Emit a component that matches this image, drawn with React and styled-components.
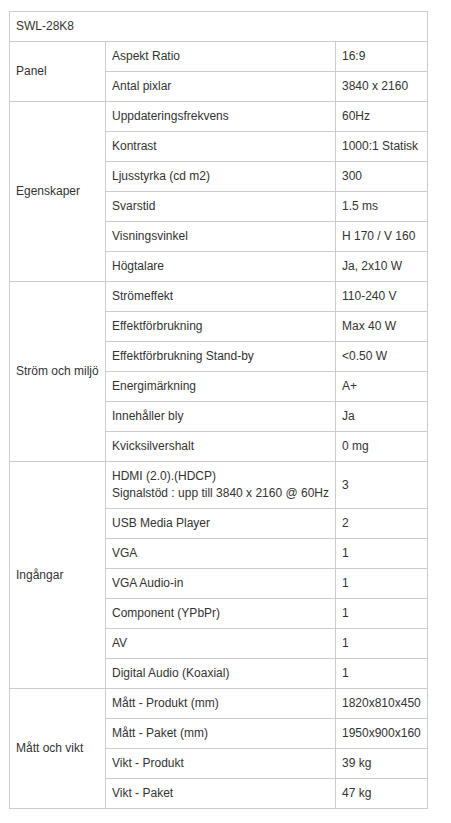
import React from "react";
import styled, { createGlobalStyle } from "styled-components";

const Global = createGlobalStyle`
  html, body { margin: 0; padding: 0; background: #fff; }
  body { font-family: "Liberation Sans", Arial, sans-serif; font-size: 12px; color: #333; }
`;

const Page = styled.div`
  padding: 11px 0 0 9px;
`;

const Table = styled.table`
  border-collapse: collapse;
  table-layout: fixed;
  width: 418px;
  font-size: 12px;
  line-height: 17px;
  color: #333;
`;

const Cell = styled.td`
  border: 1px solid #ccc;
  padding: 6px;
  vertical-align: middle;
  text-align: left;
  white-space: nowrap;
`;

const groups = [
  {
    name: "Panel",
    rows: [
      ["Aspekt Ratio", "16:9"],
      ["Antal pixlar", "3840 x 2160"],
    ],
  },
  {
    name: "Egenskaper",
    rows: [
      ["Uppdateringsfrekvens", "60Hz"],
      ["Kontrast", "1000:1 Statisk"],
      ["Ljusstyrka (cd m2)", "300"],
      ["Svarstid", "1.5 ms"],
      ["Visningsvinkel", "H 170 / V 160"],
      ["Högtalare", "Ja, 2x10 W"],
    ],
  },
  {
    name: "Ström och miljö",
    rows: [
      ["Strömeffekt", "110-240 V"],
      ["Effektförbrukning", "Max 40 W"],
      ["Effektförbrukning Stand-by", "<0.50 W"],
      ["Energimärkning", "A+"],
      ["Innehåller bly", "Ja"],
      ["Kvicksilvershalt", "0 mg"],
    ],
  },
  {
    name: "Ingångar",
    rows: [
      [["HDMI (2.0).(HDCP)", "Signalstöd : upp till 3840 x 2160 @ 60Hz"], "3"],
      ["USB Media Player", "2"],
      ["VGA", "1"],
      ["VGA Audio-in", "1"],
      ["Component (YPbPr)", "1"],
      ["AV", "1"],
      ["Digital Audio (Koaxial)", "1"],
    ],
  },
  {
    name: "Mått och vikt",
    rows: [
      ["Mått - Produkt (mm)", "1820x810x450"],
      ["Mått - Paket (mm)", "1950x900x160"],
      ["Vikt - Produkt", "39 kg"],
      ["Vikt - Paket", "47 kg"],
    ],
  },
];

function Label({ value }) {
  if (Array.isArray(value)) {
    return value.map((line, i) => (
      <React.Fragment key={i}>
        {i > 0 && <br />}
        {line}
      </React.Fragment>
    ));
  }
  return value;
}

export default function App() {
  return (
    <Page>
      <Global />
      <Table>
        <colgroup>
          <col style={{ width: 96 }} />
          <col style={{ width: 230 }} />
          <col style={{ width: 92 }} />
        </colgroup>
        <tbody>
          <tr>
            <Cell colSpan={3}>SWL-28K8</Cell>
          </tr>
          {groups.map((g) =>
            g.rows.map((r, i) => (
              <tr key={g.name + i}>
                {i === 0 && <Cell rowSpan={g.rows.length}>{g.name}</Cell>}
                <Cell>
                  <Label value={r[0]} />
                </Cell>
                <Cell>{r[1]}</Cell>
              </tr>
            ))
          )}
        </tbody>
      </Table>
    </Page>
  );
}
